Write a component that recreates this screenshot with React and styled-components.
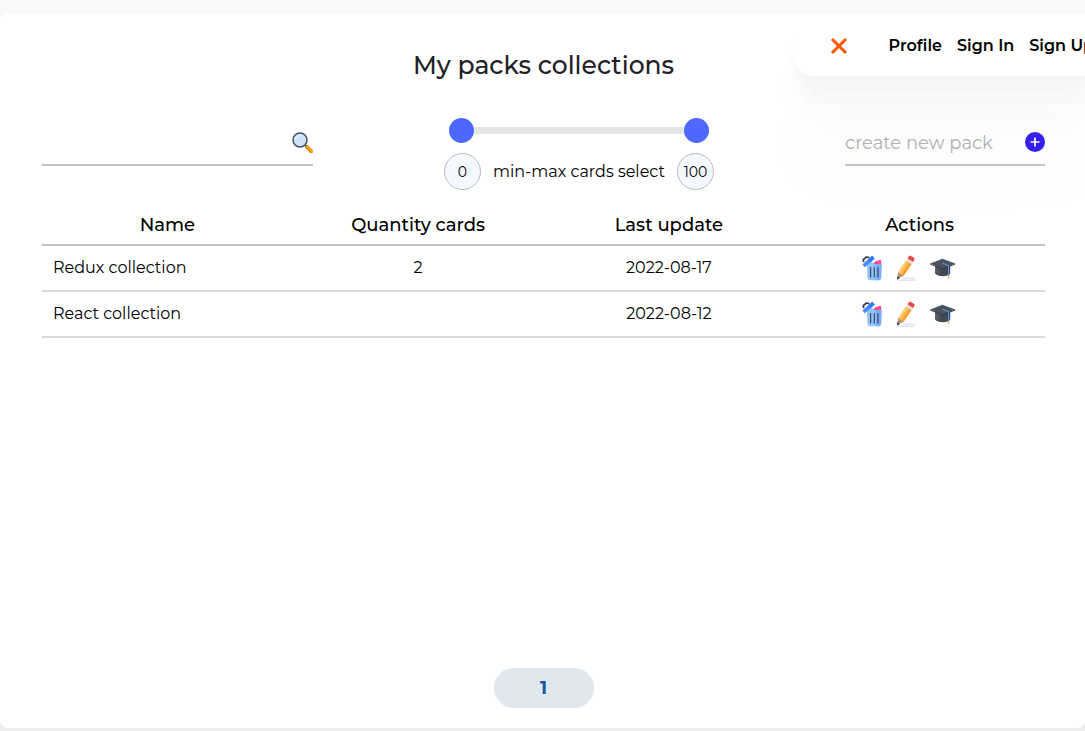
import React, { useState } from "react";
import styled, { createGlobalStyle } from "styled-components";

const GlobalStyle = createGlobalStyle`
  *, *::before, *::after { box-sizing: border-box; }
  body {
    margin: 0;
    background: linear-gradient(#fafafa, #ededed);
    color: #000;
    font-family: Montserrat, Inter, "Liberation Sans", sans-serif;
    font-size: 16px;
    line-height: 20px;
  }
  button, input { font: inherit; }
  button { padding: 0; border: 0; background: none; cursor: pointer; }
`;

const Page = styled.div`
  position: relative;
  display: flex;
  min-height: 100vh;
  padding: 13px 0 3px;
  overflow: hidden;
`;

const Card = styled.main`
  flex: 1;
  display: flex;
  flex-direction: column;
  padding: 36px 40px 20px 42px;
  border-radius: 8px;
  background: #fff;
`;

const NavPanel = styled.nav`
  position: absolute;
  top: 13px;
  right: -16px;
  display: flex;
  align-items: center;
  gap: 15px;
  height: 63px;
  padding: 2px 7px 0 36px;
  border-radius: 20px;
  background: #fff;
  box-shadow:
    0 100px 80px rgba(0, 0, 0, 0.02),
    0 42px 34px rgba(0, 0, 0, 0.02),
    0 22px 18px rgba(0, 0, 0, 0.015),
    0 12px 10px rgba(0, 0, 0, 0.01);
  clip-path: inset(0 -100px -260px -100px);
  white-space: nowrap;
`;

const CloseButton = styled.button`
  display: flex;
  margin-right: 26px;
`;

const NavLink = styled.a`
  color: #000;
  font-size: 16px;
  font-weight: 600;
  text-decoration: none;
`;

const Title = styled.h1`
  margin: 0;
  color: #1f2128;
  font-size: 25px;
  font-weight: 500;
  line-height: 32px;
  text-align: center;
`;

const Toolbar = styled.div`
  position: relative;
  display: flex;
  justify-content: space-between;
  align-items: flex-start;
  margin-top: 37px;
`;

const Field = styled.form`
  display: flex;
  align-items: center;
  width: ${(p) => p.$width}px;
  height: 48px;
  padding-top: 2px;
  border-bottom: 2px solid #c4c4c4;
`;

const FieldInput = styled.input`
  flex: 1;
  min-width: 0;
  padding: 2px 0 0;
  border: 0;
  outline: 0;
  background: transparent;
  font-size: 18px;
  &::placeholder { color: #b0b0b0; opacity: 1; }
`;

const FieldButton = styled.button`
  display: flex;
`;

const RangeBox = styled.div`
  display: flex;
  flex-direction: column;
  gap: 10px;
  width: 270px;
`;

const Sliders = styled.div`
  display: grid;
  align-items: center;
  height: 25px;
  margin: 0 5px;
  background: linear-gradient(#e5e5e5, #e5e5e5) center / 100% 7px no-repeat;
`;

const Slider = styled.input`
  grid-area: 1 / 1;
  appearance: none;
  width: 100%;
  height: 25px;
  margin: 0;
  background: transparent;
  pointer-events: none;
  &::-webkit-slider-thumb {
    appearance: none;
    width: 25px;
    height: 25px;
    border-radius: 50%;
    background: #4c68ff;
    pointer-events: auto;
    cursor: pointer;
  }
`;

const RangeLegend = styled.div`
  display: flex;
  justify-content: space-between;
  align-items: center;
`;

const RangeValue = styled.output`
  display: grid;
  place-items: center;
  width: 37px;
  height: 37px;
  border: 1px solid #b9bcc2;
  border-radius: 50%;
  background: #f5f9ff;
  font-size: 14px;
`;

const Table = styled.table`
  position: relative;
  width: 100%;
  margin-top: 15px;
  border-collapse: collapse;
  table-layout: fixed;
`;

const HeadCell = styled.th`
  height: 40px;
  padding: 1px 0 0;
  border-bottom: 2px solid #c4c4c4;
  font-size: 18px;
  font-weight: 500;
`;

const Cell = styled.td`
  height: 46px;
  padding: ${(p) => (p.$align === "left" ? "0 11px" : "0")};
  border-bottom: 2px solid #dadada;
  font-size: 16px;
  text-align: ${(p) => p.$align || "center"};
`;

const Actions = styled.div`
  display: flex;
  align-items: center;
  justify-content: center;
  gap: 8px;
  padding-right: 22px;
`;

const ActionButton = styled.button`
  display: flex;
`;

const Pagination = styled.nav`
  display: flex;
  justify-content: center;
  margin-top: auto;
`;

const PageButton = styled.button`
  width: 100px;
  height: 40px;
  border-radius: 20px;
  background: #dfe7ef;
  color: #1b569c;
  font-size: 18px;
  font-weight: 700;
`;

const CloseIcon = () => (
  <svg width="18" height="18" viewBox="0 0 18 18" aria-hidden="true">
    <path d="M2 2l14 14M16 2L2 16" stroke="#f95700" strokeWidth="3" />
  </svg>
);

const SearchIcon = () => (
  <svg width="21" height="21" viewBox="0 0 21 21" aria-hidden="true">
    <path d="M13 13l2.5 2.5" stroke="#455569" strokeWidth="2" />
    <path d="M15 15l5 5" stroke="#c97908" strokeWidth="3.8" strokeLinecap="round" />
    <path d="M15.3 14.7l5 5" stroke="#ffa322" strokeWidth="2.4" strokeLinecap="round" />
    <circle cx="8" cy="8" r="7" fill="#cfe0f7" stroke="#42526a" strokeWidth="1.5" />
    <path d="M3.6 8a4.6 4.6 0 0 1 4.6-4.5" fill="none" stroke="#edf4ff" strokeWidth="1.5" />
  </svg>
);

const PlusIcon = () => (
  <svg width="20" height="20" viewBox="0 0 20 20" aria-hidden="true">
    <circle cx="10" cy="10" r="10" fill="#3420ee" />
    <path d="M10 5.5v9M5.5 10h9" stroke="#fff" strokeWidth="1.7" />
  </svg>
);

const TrashIcon = () => (
  <svg width="26" height="26" viewBox="0 0 26 26" aria-hidden="true">
    <path d="M11 9l2-2.4 5.4-1.8.8.8V9z" fill="#ff4b91" />
    <path d="M5 8.5L10 7l2 2h7.6l-.4 13.8a2.4 2.4 0 0 1-2.4 2.4H7.8a2.4 2.4 0 0 1-2.4-2.4z" fill="#8fc4ff" />
    <path d="M14 9h5.6l-.4 13.8a2.4 2.4 0 0 1-2.4 2.4H14z" fill="#78afff" />
    <path d="M8.6 12.6v9.4M12.3 12.6v9.4M16 12.6v9.4" stroke="#383a4c" strokeWidth="1.1" strokeLinecap="round" />
    <path d="M1.7 7L1.3 4.6 4.4 2l3 .6" fill="none" stroke="#393a46" strokeWidth="1.7" strokeLinejoin="round" />
    <path d="M.4 9.6L10.2.8l2.4 2.6L2.8 12.2z" fill="#448bfc" />
    <path d="M5.8 4.8L10.2.8l2.4 2.6-4.4 4z" fill="#297bff" />
  </svg>
);

const PencilIcon = () => (
  <svg width="26" height="26" viewBox="0 0 26 26" aria-hidden="true">
    <path d="M7 23.2h11.8M2 25.2h17" stroke="#d5d9ec" strokeWidth="1" />
    <path d="M12.6 1.6L14.2.4l4.4 2.9-.5 2-1.3 2-5.4-3.6z" fill="#ef463f" />
    <path d="M11.6 3.4L10 5.7l5.4 3.8L17 7z" fill="#dce2ec" />
    <path d="M10 5.5L2.3 17.1l5.1 3.8L15.4 9.3z" fill="#ffb64b" />
    <path d="M13.6 8L5.7 19.7l1.7 1.2 8-11.6z" fill="#f29d32" />
    <path d="M10 5.5L2.3 17.1l1.5 1.1L11.6 6.6z" fill="#ffd071" />
    <path d="M2.3 17.1L.8 24l6.6-3.1z" fill="#b8916e" />
    <path d="M1.4 21.2L.8 24.7l3.3-1.8z" fill="#3c4455" />
  </svg>
);

const CapIcon = () => (
  <svg width="26" height="26" viewBox="0 0 26 26" aria-hidden="true">
    <path d="M5.3 9.4h14.9v9.2c-1.5 2-4.2 2.7-7.4 2.7s-6-.8-7.5-2.7z" fill="#414954" />
    <path d="M5.3 9.4h4v11.2c-1.8-.4-3.1-1-4-2z" fill="#515a65" />
    <path d="M.2 8.5L12.4 3.7l12.8 4.8-12.8 5z" fill="#4b535f" />
    <path d="M.2 8.5l12.2 5 12.8-5v1l-12.8 5.1L.2 9.6z" fill="#343b46" />
    <path d="M12.4 8.3l6.2 2.4v11" fill="none" stroke="#5b8ed6" strokeWidth="1.1" />
    <path d="M18.6 20.8l1 2.2h-2z" fill="#f8cf63" stroke="#f8cf63" strokeWidth=".6" />
  </svg>
);

const packs = [
  { name: "Redux collection", count: 2, updated: "2022-08-17" },
  { name: "React collection", count: null, updated: "2022-08-12" },
];

export default function App() {
  const [min, setMin] = useState(0);
  const [max, setMax] = useState(100);
  const stop = (e) => e.preventDefault();

  return (
    <Page>
      <GlobalStyle />
      <Card>
        <Title>My packs collections</Title>
        <NavPanel aria-label="Main">
          <CloseButton type="button" aria-label="Close menu"><CloseIcon /></CloseButton>
          <NavLink href="#profile">Profile</NavLink>
          <NavLink href="#sign-in">Sign In</NavLink>
          <NavLink href="#sign-up">Sign Up</NavLink>
        </NavPanel>
        <Toolbar>
          <Field $width={271} onSubmit={stop}>
            <FieldInput type="text" aria-label="Search packs" />
            <FieldButton aria-label="Search"><SearchIcon /></FieldButton>
          </Field>
          <RangeBox>
            <Sliders>
              <Slider type="range" aria-label="Minimum cards" value={min}
                onChange={(e) => setMin(Math.min(+e.target.value, max))} />
              <Slider type="range" aria-label="Maximum cards" value={max}
                onChange={(e) => setMax(Math.max(+e.target.value, min))} />
            </Sliders>
            <RangeLegend>
              <RangeValue>{min}</RangeValue>
              <span>min-max cards select</span>
              <RangeValue>{max}</RangeValue>
            </RangeLegend>
          </RangeBox>
          <Field $width={200} onSubmit={stop}>
            <FieldInput type="text" aria-label="New pack name" placeholder="create new pack" />
            <FieldButton aria-label="Create pack"><PlusIcon /></FieldButton>
          </Field>
        </Toolbar>
        <Table>
          <thead>
            <tr>
              <HeadCell scope="col">Name</HeadCell>
              <HeadCell scope="col">Quantity cards</HeadCell>
              <HeadCell scope="col">Last update</HeadCell>
              <HeadCell scope="col">Actions</HeadCell>
            </tr>
          </thead>
          <tbody>
            {packs.map((pack) => (
              <tr key={pack.name}>
                <Cell $align="left">{pack.name}</Cell>
                <Cell>{pack.count}</Cell>
                <Cell>{pack.updated}</Cell>
                <Cell>
                  <Actions>
                    <ActionButton type="button" aria-label="Delete"><TrashIcon /></ActionButton>
                    <ActionButton type="button" aria-label="Edit"><PencilIcon /></ActionButton>
                    <ActionButton type="button" aria-label="Learn"><CapIcon /></ActionButton>
                  </Actions>
                </Cell>
              </tr>
            ))}
          </tbody>
        </Table>
        <Pagination aria-label="Pages">
          <PageButton type="button">1</PageButton>
        </Pagination>
      </Card>
    </Page>
  );
}
